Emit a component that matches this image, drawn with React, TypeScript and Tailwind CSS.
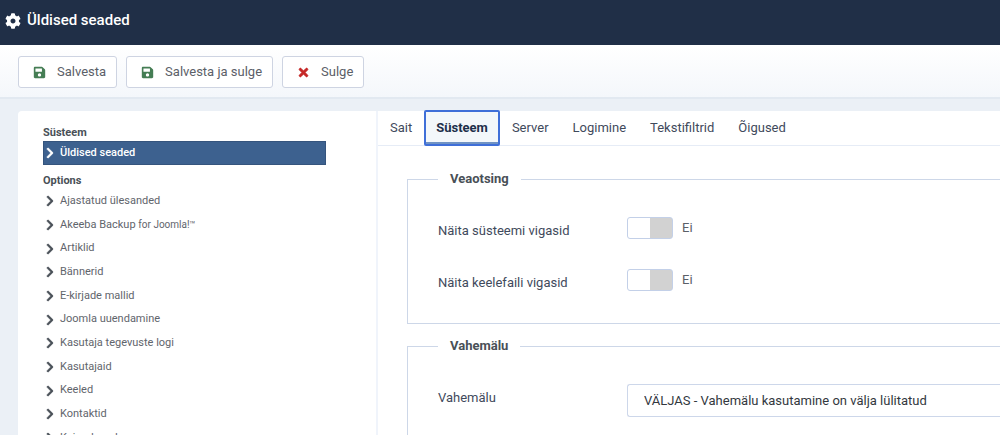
import { FaCog, FaSave, FaTimes, FaChevronRight } from 'react-icons/fa';
import type { ReactNode } from 'react';

const options: ReactNode[] = [
  'Ajastatud ülesanded',
  <>
    Akeeba Backup <span className="text-[10px]">for Joomla!™</span>
  </>,
  'Artiklid',
  'Bännerid',
  'E-kirjade mallid',
  'Joomla uuendamine',
  'Kasutaja tegevuste logi',
  'Kasutajaid',
  'Keeled',
  'Kontaktid',
  'Kujundused',
];

const tabs = ['Sait', 'Süsteem', 'Server', 'Logimine', 'Tekstifiltrid', 'Õigused'];

function ToolbarButton({ icon, children }: { icon: ReactNode; children: ReactNode }) {
  return (
    <button
      type="button"
      className="flex h-8 items-center gap-2.5 rounded-[3px] border border-[#ced4e2] bg-white pr-2.5 pl-3 text-[13px] text-[#5b6068]"
    >
      <span className="flex w-4 justify-center">{icon}</span>
      {children}
    </button>
  );
}

function Sidebar() {
  return (
    <nav className="w-[360px] shrink-0 border-r-2 border-[#f0f4fb] pt-[13px] pr-[50px] pl-[25px] text-[11px]">
      <h2 className="leading-[17px] font-bold text-[#495057]">Süsteem</h2>
      <a
        href="#system"
        className="flex h-6 items-center gap-1 border border-[#35547d] bg-[#3d618f] font-medium text-white"
      >
        <FaChevronRight className="size-3 stroke-[20]" />
        Üldised seaded
      </a>
      <h2 className="mt-2 leading-4 font-bold text-[#495057]">Options</h2>
      <ul>
        {options.map((option, index) => (
          <li key={index} className="h-6 nth-[3n]:h-[23px]">
            <a href="#option" className="flex h-full items-center gap-1 text-[#5f656c]">
              <FaChevronRight className="ml-px size-3 stroke-[20] text-[#495057]" />
              <span>{option}</span>
            </a>
          </li>
        ))}
      </ul>
    </nav>
  );
}

function Fieldset({ title, children }: { title: string; children: ReactNode }) {
  return (
    <fieldset className="border border-r-0 border-[#cdd7e8] pl-[30px]">
      <legend className="px-3 text-[13px] leading-4 font-bold text-[#495057]">{title}</legend>
      {children}
    </fieldset>
  );
}

function SwitchRow({ id, label }: { id: string; label: string }) {
  return (
    <div className="flex h-[52px] items-start">
      <label htmlFor={id} className="w-[189px] pt-1 text-[13px] leading-5 text-[#3f4a5c]">
        {label}
      </label>
      <input
        id={id}
        type="checkbox"
        role="switch"
        className="h-[22px] w-[46px] appearance-none rounded-[3px] border border-[#c3d0e8] bg-linear-to-r from-white from-50% to-[#d2d2d2] to-50%"
      />
      <span className="pl-[9px] text-[13px] leading-[22px] text-[#5b6068]">Ei</span>
    </div>
  );
}

export default function App() {
  return (
    <div className="h-screen overflow-hidden bg-[#ebf0f6] font-[Roboto,sans-serif]">
      <header className="flex h-[45px] items-center gap-1.5 bg-[#202f47] pb-1 pl-[5px] text-white">
        <FaCog className="size-4" />
        <h1 className="text-[15px] font-medium">Üldised seaded</h1>
      </header>

      <div className="flex h-[54px] items-center gap-[9px] border-b-2 border-[#e2e9f1] bg-linear-to-b from-white to-[#f4f7fb] pt-0.5 pl-[18px]">
        <ToolbarButton icon={<FaSave className="size-[13px] text-[#457d54]" />}>Salvesta</ToolbarButton>
        <ToolbarButton icon={<FaSave className="size-[13px] text-[#457d54]" />}>Salvesta ja sulge</ToolbarButton>
        <ToolbarButton icon={<FaTimes className="size-[13px] stroke-[24] text-[#c52827]" />}>Sulge</ToolbarButton>
      </div>

      <main className="mt-3 ml-[18px] flex rounded-tl bg-white">
        <Sidebar />
        <div className="min-w-0 flex-1">
          <div role="tablist" className="flex h-[35px] border-b border-[#e6ecf6] text-[13px] text-[#3f4a5c]">
            {tabs.map((tab) =>
              tab === 'Süsteem' ? (
                <button
                  key={tab}
                  type="button"
                  role="tab"
                  aria-selected="true"
                  className="-mt-px h-9 rounded-xs border-2 border-[#3f6fd8] bg-[#f3f7fa] px-2.5 font-bold text-[#1d2f4a] shadow-[inset_0_-2px_0_#6f92c4]"
                >
                  {tab}
                </button>
              ) : (
                <button key={tab} type="button" role="tab" aria-selected="false" className="px-3">
                  {tab}
                </button>
              ),
            )}
          </div>

          <div className="flex flex-col gap-[14px] pt-[25px] pl-[29px]">
            <Fieldset title="Veaotsing">
              <div className="pt-[30px] pb-0.5">
                <SwitchRow id="debug" label="Näita süsteemi vigasid" />
                <SwitchRow id="debug-lang" label="Näita keelefaili vigasid" />
              </div>
            </Fieldset>
            <Fieldset title="Vahemälu">
              <div className="flex pt-[30px] pb-8">
                <label htmlFor="caching" className="w-[189px] pt-1 text-[13px] leading-5 text-[#3f4a5c]">
                  Vahemälu
                </label>
                <select
                  id="caching"
                  className="h-[33px] flex-1 appearance-none rounded-l-[3px] border border-r-0 border-[#cdd7ea] bg-white px-4 text-[13px] text-[#33383e]"
                >
                  <option>VÄLJAS - Vahemälu kasutamine on välja lülitatud</option>
                </select>
              </div>
            </Fieldset>
          </div>
        </div>
      </main>
    </div>
  );
}
